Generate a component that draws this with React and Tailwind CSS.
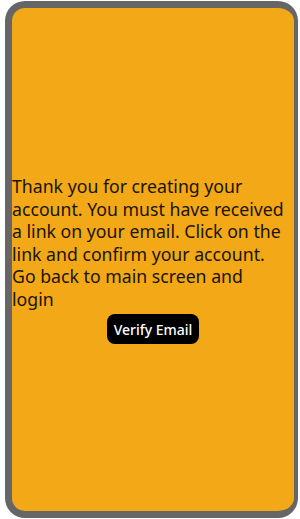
export default function App() {
    return (
        <div className="w-[300px] h-[519px] bg-white pl-[5px] pr-[2px] pt-[1px] pb-[1px]">
            <div className="h-full border-[7px] border-r-[4px] border-[#666666] rounded-[20px] bg-[#f2a817] flex flex-col justify-center overflow-hidden">
                <p className="pr-[10px] text-[17.7px] leading-[22.5px] text-[#1a1405] font-['Noto_Sans',sans-serif]">
                    Thank you for creating your account. You must have received a link on your email. Click on the link and confirm your account. Go back to main screen and login
                </p>
                <div className="flex justify-center mt-[4px]">
                    <button className="bg-black text-white rounded-[8px] px-[7px] h-[30px] text-[14px] font-medium font-['Noto_Sans',sans-serif]">
                        Verify Email
                    </button>
                </div>
            </div>
        </div>
    );
}
